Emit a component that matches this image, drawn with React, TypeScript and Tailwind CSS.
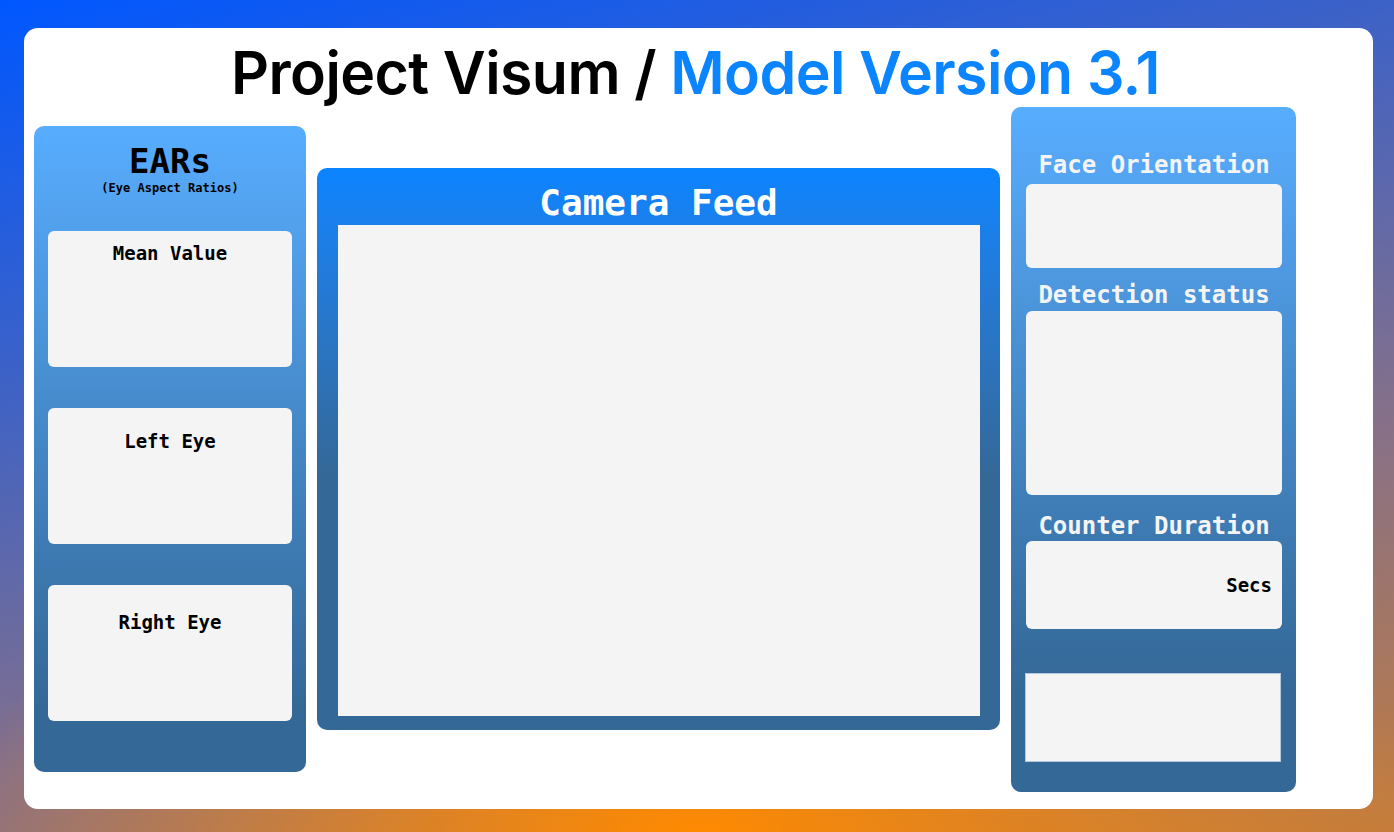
import React from 'react';

const mono = "font-['DejaVu_Sans_Mono','Liberation_Mono',monospace]";

const EarBox: React.FC<{ label: string; pad: string }> = ({ label, pad }) => (
  <div className={`h-[136px] w-[244px] rounded-md bg-[#f4f4f4] text-center ${pad}`}>
    <span className={`${mono} text-[19px] font-bold text-black`}>{label}</span>
  </div>
);

const App: React.FC = () => {
  return (
    <div className="h-[832px] w-[1394px] overflow-hidden bg-[radial-gradient(ellipse_55%_35%_at_50%_100%,#ff8a00_0%,rgba(255,138,0,0)_100%),linear-gradient(165deg,#0057ff_0%,#4463c0_35%,#85708a_65%,#c07c40_100%)] pt-[28px] pl-[24px]">
      <div className="h-[781px] w-[1349px] rounded-[14px] bg-white">
        {/* Title */}
        <div className="flex h-[79px] items-center justify-center pt-[10px] pr-[6px]">
          <h1 className="font-['Inter','Noto_Sans',sans-serif] text-[59px] leading-none font-semibold tracking-[-0.01em] text-black">
            Project Visum / <span className="text-[#0a84ff]">Model Version 3.1</span>
          </h1>
        </div>

        <div className="flex items-start pl-[10px]">
          {/* EARs panel */}
          <div className="mt-[19px] flex h-[646px] w-[272px] flex-col items-center rounded-[10px] bg-linear-to-b from-[#58adff] to-[#346897] to-90%">
            <div className={`${mono} mt-[15px] text-[34px] leading-[40px] font-bold text-black`}>EARs</div>
            <div className={`${mono} text-[12px] leading-[14px] font-bold text-black`}>(Eye Aspect Ratios)</div>
            <div className="mt-[36px] flex flex-col gap-[41px]">
              <EarBox label="Mean Value" pad="pt-[8px]" />
              <EarBox label="Left Eye" pad="pt-[19px]" />
              <EarBox label="Right Eye" pad="pt-[23px]" />
            </div>
          </div>

          {/* Camera feed */}
          <div className="mt-[61px] ml-[11px] flex h-[562px] w-[683px] flex-col rounded-[10px] bg-linear-to-b from-[#0a84ff] to-[#346897] to-55%">
            <div className={`${mono} pt-[13px] text-center text-[36px] leading-[44px] font-bold text-white`}>Camera Feed</div>
            <div className="ml-[21px] h-[491px] w-[642px] bg-[#f4f4f4]" />
          </div>

          {/* Right panel */}
          <div className="ml-[11px] flex h-[685px] w-[285px] flex-col rounded-[10px] bg-linear-to-b from-[#58adff] to-[#346897] to-85% pl-[15px]">
            <div className={`${mono} mt-[44px] w-[256px] text-center text-[24px] leading-[28px] font-bold text-[#f4f4f4]`}>Face Orientation</div>
            <div className="mt-[5px] h-[84px] w-[256px] rounded-md bg-[#f4f4f4]" />
            <div className={`${mono} mt-[13px] w-[256px] text-center text-[24px] leading-[28px] font-bold text-[#f4f4f4]`}>Detection status</div>
            <div className="mt-[2px] h-[184px] w-[256px] rounded-md bg-[#f4f4f4]" />
            <div className={`${mono} mt-[17px] w-[256px] text-center text-[24px] leading-[28px] font-bold text-[#f4f4f4]`}>Counter Duration</div>
            <div className="mt-[1px] flex h-[88px] w-[256px] items-center justify-end rounded-md bg-[#f4f4f4] pr-[10px]">
              <span className={`${mono} text-[19px] font-bold text-black`}>Secs</span>
            </div>
            <div className="mt-[44px] -ml-px h-[89px] w-[256px] border border-[#b8c8dc] bg-[#f4f4f4]" />
          </div>
        </div>
      </div>
    </div>
  );
};

export default App;
